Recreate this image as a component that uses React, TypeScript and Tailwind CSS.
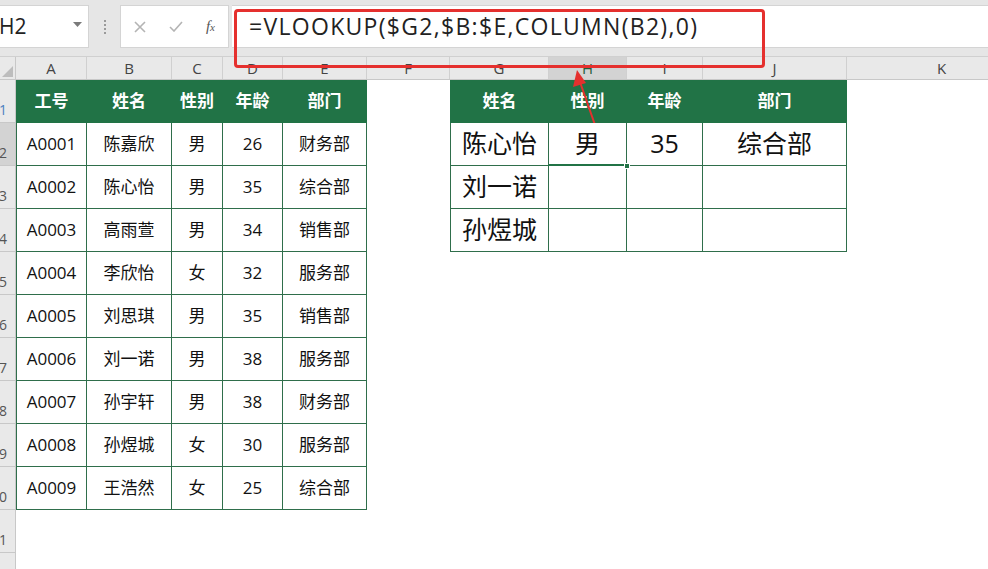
import { Fragment } from "react";

// column widths: row header, then A..K
const COLS = [
  { key: "", w: "w-[16px]" },
  { key: "A", w: "w-[71px]" },
  { key: "B", w: "w-[85px]" },
  { key: "C", w: "w-[51px]" },
  { key: "D", w: "w-[60px]" },
  { key: "E", w: "w-[84px]" },
  { key: "F", w: "w-[83px]" },
  { key: "G", w: "w-[99px]" },
  { key: "H", w: "w-[78px]" },
  { key: "I", w: "w-[76px]" },
  { key: "J", w: "w-[144px]" },
  { key: "K", w: "w-[190px]" },
];

const LEFT_HEAD = ["工号", "姓名", "性别", "年龄", "部门"];
const LEFT_ROWS = [
  ["A0001", "陈嘉欣", "男", "26", "财务部"],
  ["A0002", "陈心怡", "男", "35", "综合部"],
  ["A0003", "高雨萱", "男", "34", "销售部"],
  ["A0004", "李欣怡", "女", "32", "服务部"],
  ["A0005", "刘思琪", "男", "35", "销售部"],
  ["A0006", "刘一诺", "男", "38", "服务部"],
  ["A0007", "孙宇轩", "男", "38", "财务部"],
  ["A0008", "孙煜城", "女", "30", "服务部"],
  ["A0009", "王浩然", "女", "25", "综合部"],
];

const RIGHT_HEAD = ["姓名", "性别", "年龄", "部门"];
const RIGHT_ROWS = [
  ["陈心怡", "男", "35", "综合部"],
  ["刘一诺", "", "", ""],
  ["孙煜城", "", "", ""],
];

const FONT = "font-['Open_Sans','Noto_Sans_CJK_SC',sans-serif]";

function cellContent(row: number, col: number) {
  // col: 1..11 (A..K), row: 1..12
  if (col >= 1 && col <= 5) {
    if (row === 1) return { kind: "lhead", text: LEFT_HEAD[col - 1] };
    if (row <= 10) return { kind: "lbody", text: LEFT_ROWS[row - 2][col - 1] };
  }
  if (col >= 7 && col <= 10) {
    if (row === 1) return { kind: "rhead", text: RIGHT_HEAD[col - 7] };
    if (row <= 4) return { kind: "rbody", text: RIGHT_ROWS[row - 2][col - 7] };
  }
  return { kind: "empty", text: "" };
}

function Cell({ row, col }: { row: number; col: number }) {
  const { kind, text } = cellContent(row, col);
  const w = COLS[col].w;
  const first = col === 1 || col === 7;
  const selected = row === 2 && col === 8;

  if (kind === "empty") return <div className={`${w} h-full shrink-0 bg-white`} />;

  const head = kind === "lhead" || kind === "rhead";
  return (
    <div
      className={`${w} h-full shrink-0 relative flex items-center justify-center border-r border-b ${
        first ? "border-l" : ""
      } ${
        head
          ? "bg-[#217346] border-[#217346] text-white font-bold text-[17px]"
          : "bg-white border-[#2f6e4b] text-[#111]"
      } ${kind === "lbody" ? "text-[17px]" : ""} ${kind === "rbody" ? "text-[25px]" : ""} ${
        selected ? "z-10" : ""
      }`}
    >
      {text}
      {selected && (
        <>
          <div className="absolute left-[-1px] right-[-1px] bottom-[-1px] h-[2px] bg-[#217346]" />
          <div className="absolute right-[-4px] bottom-[-4px] w-[6px] h-[6px] bg-[#217346] border border-white" />
        </>
      )}
    </div>
  );
}

function FormulaBar() {
  return (
    <div className="h-[57px] bg-[#e6e6e6] flex items-start pt-[5px] border-b border-[#d0d0d0]">
      <div className="w-[89px] h-[43px] bg-white border-r border-y border-[#d4d4d4] flex items-center justify-between pr-[6px]">
        <span className="text-[21px] text-[#222] ml-[-1px]">H2</span>
        <svg width="9" height="6" viewBox="0 0 9 6" className="mb-[4px]">
          <path d="M0 0h9L4.5 5z" fill="#7a7a7a" />
        </svg>
      </div>
      <div className="w-[31px] h-[43px] flex flex-col items-center justify-center gap-[2px]">
        <span className="w-[2px] h-[2px] bg-[#9a9a9a]" />
        <span className="w-[2px] h-[2px] bg-[#9a9a9a]" />
        <span className="w-[2px] h-[2px] bg-[#9a9a9a]" />
        <span className="w-[2px] h-[2px] bg-[#9a9a9a]" />
      </div>
      <div className="w-[109px] h-[43px] bg-white border border-[#d4d4d4] flex items-center justify-between px-[13px]">
        <svg width="12" height="12" viewBox="0 0 12 12">
          <path d="M1 1l10 10M11 1L1 11" stroke="#b4b4b4" strokeWidth="1.6" />
        </svg>
        <svg width="14" height="11" viewBox="0 0 14 11">
          <path d="M1 6l4 4 8-9" stroke="#b4b4b4" strokeWidth="1.6" fill="none" />
        </svg>
        <span className="font-['Liberation_Serif',serif] italic text-[15px] text-[#555]">
          f<span className="text-[11px]">x</span>
        </span>
      </div>
      <div className="flex-1 h-[43px] ml-[3px] bg-white border-y border-[#d4d4d4] flex items-center pl-[17px]">
        <span className="text-[23px] text-[#222] tracking-[1.3px]">=VLOOKUP($G2,$B:$E,COLUMN(B2),0)</span>
      </div>
    </div>
  );
}

function ColumnHeaders() {
  return (
    <div className="h-[23px] flex bg-[#e9e9e9] border-b border-[#c8c8c8]">
      {COLS.map((c, i) =>
        i === 0 ? (
          <div key="corner" className={`${c.w} h-full shrink-0 border-r border-[#c8c8c8] flex items-end justify-end p-[2px]`}>
            <svg width="11" height="11" viewBox="0 0 11 11">
              <path d="M11 0v11H0z" fill="#bdbdbd" />
            </svg>
          </div>
        ) : (
          <div
            key={c.key}
            className={`${c.w} h-full shrink-0 flex items-center justify-center border-r border-[#d0d0d0] text-[15px] ${
              c.key === "H" ? "bg-[#d3d3d3] text-[#1f5f3c]" : "text-[#444]"
            }`}
          >
            {c.key}
          </div>
        )
      )}
    </div>
  );
}

export default function App() {
  const rows = Array.from({ length: 12 }, (_, i) => i + 1);
  return (
    <div className={`relative w-[988px] h-[569px] overflow-hidden bg-white ${FONT}`}>
      <FormulaBar />
      <ColumnHeaders />
      {rows.map((r) => (
        <div key={r} className="h-[43px] flex">
          <div
            className={`w-[16px] h-full shrink-0 overflow-hidden flex items-end justify-end pr-[8px] pb-[5px] border-r border-b border-[#c8c8c8] text-[14px] leading-none ${
              r === 2 ? "bg-[#d3d3d3] text-[#555]" : "bg-[#e9e9e9] text-[#555]"
            }`}
          >
            <span className={r === 1 ? "text-[#4a7fc0]" : ""}>{r}</span>
          </div>
          {COLS.slice(1).map((c, i) => (
            <Fragment key={c.key}>
              <Cell row={r} col={i + 1} />
            </Fragment>
          ))}
        </div>
      ))}

      {/* red highlight around the formula */}
      <div className="absolute left-[234px] top-[9px] w-[531px] h-[59px] border-[3px] border-[#e5302e] rounded-[4px]" />

      {/* red arrow pointing at column H */}
      <svg className="absolute left-0 top-0 pointer-events-none" width="988" height="569">
        <line x1="602" y1="145" x2="580" y2="82" stroke="#e5302e" strokeWidth="2" />
        <path d="M577 70 L573 87 L586 83 Z" fill="#e5302e" />
      </svg>
    </div>
  );
}
